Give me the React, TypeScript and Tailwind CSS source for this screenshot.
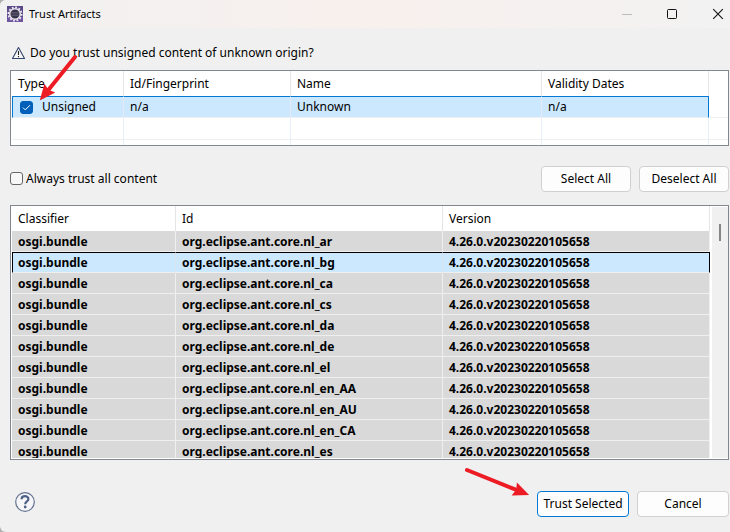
import React, { useState } from "react";

const locales = ["ar", "bg", "ca", "cs", "da", "de", "el", "en_AA", "en_AU", "en_CA", "es"];

function EclipseIcon() {
  return (
    <svg width="16" height="16" viewBox="0 0 16 16" aria-hidden="true">
      <rect width="16" height="16" fill="#5a4788" />
      <rect y="11" width="16" height="5" fill="#6f55a0" />
      <circle cx="8" cy="8" r="6.6" fill="none" stroke="#ece8f2" strokeWidth="1.8" strokeDasharray="1.9 1.55" />
      <circle cx="8" cy="8" r="5.3" fill="#37324c" stroke="#e6e3ea" strokeWidth="1.5" />
      <path d="M4.4 6.5h7.2M4 8h8M4.4 9.5h7.2" stroke="#5f5a70" strokeWidth="0.8" />
    </svg>
  );
}

function TitleBar() {
  return (
    <header className="flex h-7 items-center bg-linear-to-r from-[#f1f1f1] via-[#f8f0ed] to-[#f2f2f2] px-[7px]">
      <EclipseIcon />
      <h1 className="ml-[6px] text-[11px] leading-4">Trust Artifacts</h1>
      <div className="ml-auto flex items-center gap-[35px]">
        <button type="button" aria-label="Minimize" disabled>
          <svg width="10" height="10" viewBox="0 0 10 10">
            <path d="M0 5.5h10" stroke="#bdbbbb" />
          </svg>
        </button>
        <button type="button" aria-label="Maximize">
          <svg width="10" height="10" viewBox="0 0 10 10">
            <rect x="0.5" y="0.5" width="9" height="9" rx="1" fill="none" stroke="#111" />
          </svg>
        </button>
        <button type="button" aria-label="Close" className="-mr-px">
          <svg width="12" height="12" viewBox="0 0 12 12">
            <path d="M1.2 1.2l9.6 9.6M10.8 1.2L1.2 10.8" stroke="#111" strokeWidth="1.1" />
          </svg>
        </button>
      </div>
    </header>
  );
}

function OriginTable() {
  const [checked, setChecked] = useState(true);
  return (
    <div className="mr-px h-[76px] overflow-hidden border border-[#828790] bg-white pl-px">
      <table className="w-full table-fixed border-separate border-spacing-0 text-left">
        <colgroup>
          <col className="w-[112px]" />
          <col className="w-[167px]" />
          <col className="w-[251px]" />
          <col />
          <col className="w-[19px]" />
        </colgroup>
        <thead>
          <tr className="h-[25px]">
            {["Type", "Id/Fingerprint", "Name", "Validity Dates"].map((h) => (
              <th key={h} className="border-r border-[#e5e5e5] px-[6px] py-0 font-normal">{h}</th>
            ))}
            <td />
          </tr>
        </thead>
        <tbody>
          <tr className="h-[22px]">
            <td className="border-t border-r border-b border-l border-t-[#0078d4] border-r-[#e3eaf3] border-b-[#efefef] border-l-[#0078d4] bg-[#cce8ff] p-0">
              <label className="flex items-center pl-[7px]">
                <span className="grid">
                  <input
                    type="checkbox"
                    checked={checked}
                    onChange={(e) => setChecked(e.target.checked)}
                    className="peer col-start-1 row-start-1 size-[13px] appearance-none rounded-[3px] border border-[#666] bg-white checked:border-[#005fb8] checked:bg-[#005fb8]"
                  />
                  <svg width="13" height="13" viewBox="0 0 13 13" className="pointer-events-none col-start-1 row-start-1 hidden peer-checked:block">
                    <path d="M3 6.6l2.3 2.3 4.7-4.7" fill="none" stroke="#fff" />
                  </svg>
                </span>
                <span className="ml-[9px]">Unsigned</span>
              </label>
            </td>
            <td className="border-t border-r border-b border-t-[#0078d4] border-r-[#e3eaf3] border-b-[#efefef] bg-[#cce8ff] px-[6px] py-0">n/a</td>
            <td className="border-t border-r border-b border-t-[#0078d4] border-r-[#e3eaf3] border-b-[#efefef] bg-[#cce8ff] px-[6px] py-0">Unknown</td>
            <td className="border-t border-r border-b border-t-[#0078d4] border-r-[#0078d4] border-b-[#efefef] bg-[#cce8ff] px-[6px] py-0">n/a</td>
            <td className="border-b border-[#efefef]" />
          </tr>
          <tr className="h-[22px]">
            {[0, 1, 2, 3].map((i) => (
              <td key={i} className="border-r border-b border-r-[#e8eef8] border-b-[#efefef]" />
            ))}
            <td className="border-b border-[#efefef]" />
          </tr>
          <tr className="h-[22px]">
            {[0, 1, 2, 3].map((i) => (
              <td key={i} className="border-r border-[#e8eef8]" />
            ))}
            <td />
          </tr>
        </tbody>
      </table>
    </div>
  );
}

function BundleTable() {
  const [selected, setSelected] = useState("bg");
  return (
    <div className="mr-px flex h-[255px] items-stretch overflow-hidden border border-[#828790] bg-white pb-px pl-px">
      <div className="h-[252px] min-w-0 flex-1 overflow-hidden">
        <table className="w-full table-fixed border-separate border-spacing-0 text-left">
          <colgroup>
            <col className="w-[164px]" />
            <col className="w-[267px]" />
            <col />
          </colgroup>
          <thead>
            <tr className="h-[25px]">
              {["Classifier", "Id", "Version"].map((h) => (
                <th key={h} className="border-r border-[#e5e5e5] px-[6px] py-0 font-normal">{h}</th>
              ))}
            </tr>
          </thead>
          <tbody className="font-bold">
            {locales.map((l) =>
              l === selected ? (
                <tr key={l} className="h-[21px] bg-[#cce8ff]">
                  <td className="border-t border-r border-b border-l border-t-black border-r-[#d9e3ee] border-b-[#efefef] border-l-black py-0 pr-[6px] pl-[5px]">osgi.bundle</td>
                  <td className="border-t border-r border-b border-t-black border-r-[#d9e3ee] border-b-[#efefef] px-[6px] py-0">org.eclipse.ant.core.nl_{l}</td>
                  <td className="border-t border-r border-b border-t-black border-r-black border-b-[#efefef] px-[6px] py-0">4.26.0.v20230220105658</td>
                </tr>
              ) : (
                <tr key={l} className="h-[21px] bg-[#d9d9d9]" onClick={() => setSelected(l)}>
                  <td className="border-r border-b border-[#efefef] px-[6px] pt-[2px] pb-0">osgi.bundle</td>
                  <td className="border-r border-b border-[#efefef] px-[6px] pt-[2px] pb-0">org.eclipse.ant.core.nl_{l}</td>
                  <td className="border-r border-b border-[#efefef] px-[6px] pt-[2px] pb-0">4.26.0.v20230220105658</td>
                </tr>
              ),
            )}
          </tbody>
        </table>
      </div>
      <div className="mt-px ml-[2px] flex w-4 justify-center bg-[#f0f0f0] pt-[17px]">
        <div className="h-[17px] w-[2px] bg-[#858585]" />
      </div>
    </div>
  );
}

function Arrow({ className, angle, length }: { className: string; angle: number; length: number }) {
  return (
    <svg className={className} viewBox="0 0 70 60" width="70" height="60" aria-hidden="true">
      <g transform={`translate(${angle > 90 ? 41 : 2} 5) rotate(${angle})`} fill="#ed1c24">
        <path d={`M0 0H${length - 13}`} stroke="#ed1c24" strokeWidth="4" strokeLinecap="round" />
        <path d={`M${length} 0L${length - 16} -7L${length - 14} 0L${length - 16} 7Z`} />
      </g>
    </svg>
  );
}

const button = "h-[26px] rounded-[4px] border bg-[#fdfdfd] text-center";

export default function App() {
  return (
    <div className="bg-[#b0b0b0]">
      <main className="relative overflow-hidden rounded-l-md bg-[#f0f0f0] pb-[15px] font-['Noto_Sans','Open_Sans',sans-serif] text-[12px] leading-4 text-black">
        <TitleBar />
        <div className="pl-[10px]">
          <div className="flex h-[42px] items-center gap-1 pt-[7px] pl-px">
            <svg width="15" height="14" viewBox="0 0 15 14" aria-hidden="true">
              <path d="M7.5 1.5L13.5 12.5H1.5Z" fill="#f7f7f7" stroke="#33476b" strokeWidth="1.1" strokeLinejoin="round" />
              <path d="M7.5 5v4M7.5 10v1.3" stroke="#222" strokeWidth="1.1" />
            </svg>
            <p>Do you trust unsigned content of unknown origin?</p>
          </div>
          <OriginTable />
          <div className="flex h-[59px] items-center gap-2 pr-px pb-px pt-[7px]">
            <label className="flex items-center gap-[3px]">
              <input type="checkbox" className="size-[13px] appearance-none rounded-[3px] border border-[#666] bg-[#f7f7f7] checked:bg-[#005fb8]" />
              Always trust all content
            </label>
            <button type="button" className={`${button} ml-auto w-[90px] border-[#d0d0d0]`}>Select All</button>
            <button type="button" className={`${button} w-[90px] border-[#d0d0d0]`}>Deselect All</button>
          </div>
          <BundleTable />
          <div className="flex items-center gap-2 pt-[31px] pr-px">
            <button type="button" aria-label="Help" className="ml-[5px] pb-1">
              <svg width="20" height="20" viewBox="0 0 20 20">
                <circle cx="10" cy="10" r="9.3" fill="#f6f6f8" stroke="#647392" strokeWidth="1.2" />
                <path d="M6.6 7.2C6.6 3.2 13.4 3.2 13.4 7C13.4 9.5 10.2 9.2 10.2 12.2" fill="none" stroke="#4d6085" strokeWidth="2.2" />
                <circle cx="10.2" cy="15" r="1.4" fill="#4d6085" />
              </svg>
            </button>
            <button type="button" className={`${button} ml-auto w-[92px] border-[#0078d4]`}>Trust Selected</button>
            <button type="button" className={`${button} w-[92px] border-[#d0d0d0]`}>Cancel</button>
          </div>
        </div>
        <Arrow className="pointer-events-none absolute top-[52px] left-[34px]" angle={129} length={56} />
        <Arrow className="pointer-events-none absolute top-[465px] left-[465px]" angle={22} length={67} />
      </main>
    </div>
  );
}
